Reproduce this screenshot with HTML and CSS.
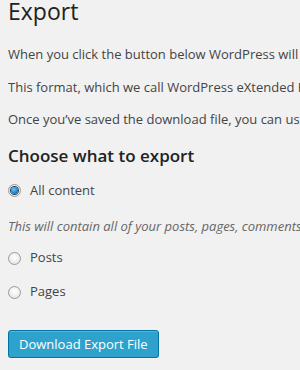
FILE: index.html
```html
<!doctype html>
<html lang="en">
<head>
  <meta charset="utf-8">
  <title>Export</title>
  <link rel="stylesheet" href="styles.css">
</head>
<body>
  <div class="wrap">
    <h2 class="page-title">Export</h2>

    <p>When you click the button below WordPress will create an XML file for you to save to your computer.</p>
    <p>This format, which we call WordPress eXtended RSS or WXR, will contain your posts, pages, comments, custom fields, categories, and tags.</p>
    <p>Once you’ve saved the download file, you can use the Import function in another WordPress installation to import the content from this site.</p>

    <h3 class="section-title">Choose what to export</h3>

    <form class="export-form">
      <label class="choice">
        <input type="radio" name="content" value="all" checked>
        <span>All content</span>
      </label>
      <p class="description">This will contain all of your posts, pages, comments, custom fields, terms, navigation menus and custom posts.</p>

      <label class="choice">
        <input type="radio" name="content" value="posts">
        <span>Posts</span>
      </label>

      <label class="choice">
        <input type="radio" name="content" value="pages">
        <span>Pages</span>
      </label>

      <div class="submit">
        <button type="button" class="button-primary">Download Export File</button>
      </div>
    </form>
  </div>
</body>
</html>
```
FILE: styles.css
```css
/* page */
html, body {
  margin: 0;
  padding: 0;
  background: #f1f1f1;
}

body {
  font-family: "Open Sans", sans-serif;
  font-size: 13px;
  line-height: 1.5;
  color: #444;
  overflow: hidden;
}

.wrap {
  padding: 0 8px;
  width: 900px;
}

/* headings */
.page-title {
  margin: 0;
  font-size: 23px;
  font-weight: 400;
  line-height: 23px;
  color: #222;
}

.section-title {
  margin: 14px 0 0;
  font-size: 17px;
  font-weight: 600;
  line-height: 23px;
  color: #222;
}

p {
  margin: 13px 0;
  white-space: nowrap;
}

.wrap > p:first-of-type {
  margin-top: 22px;
}

/* radio list */
.export-form {
  margin-top: 14px;
}

.choice {
  display: flex;
  align-items: center;
  gap: 9px;
  height: 20px;
}

.choice input {
  appearance: none;
  margin: 0;
  width: 13px;
  height: 13px;
  border-radius: 50%;
  border: 1px solid #9a9a9a;
  background: radial-gradient(circle at 50% 40%, #ffffff 0, #f4f4f4 40%, #dcdcdc 100%);
  display: grid;
  place-items: center;
}

.choice input:checked::before {
  content: "";
  width: 7px;
  height: 7px;
  border-radius: 50%;
  background: radial-gradient(circle at 40% 35%, #6fc6f4 0, #1e8fd6 50%, #0d4f87 100%);
  box-shadow: 0 0 0 1px #2b3f55;
}

.description {
  margin: 16px 0 12px;
  font-style: italic;
  color: #666;
}

.choice + .choice {
  margin-top: 14px;
}

/* button */
.submit {
  margin-top: 28px;
}

.button-primary {
  display: inline-block;
  height: 28px;
  margin: 0;
  padding: 0 10px 1px;
  border: 1px solid #0074a2;
  border-radius: 3px;
  background: #2ea2cc;
  box-shadow: inset 0 1px 0 rgba(120, 200, 230, 0.5), 0 1px 0 rgba(0, 0, 0, 0.15);
  color: #fff;
  font-family: "Open Sans", sans-serif;
  font-size: 13px;
  line-height: 26px;
  cursor: pointer;
}
```
